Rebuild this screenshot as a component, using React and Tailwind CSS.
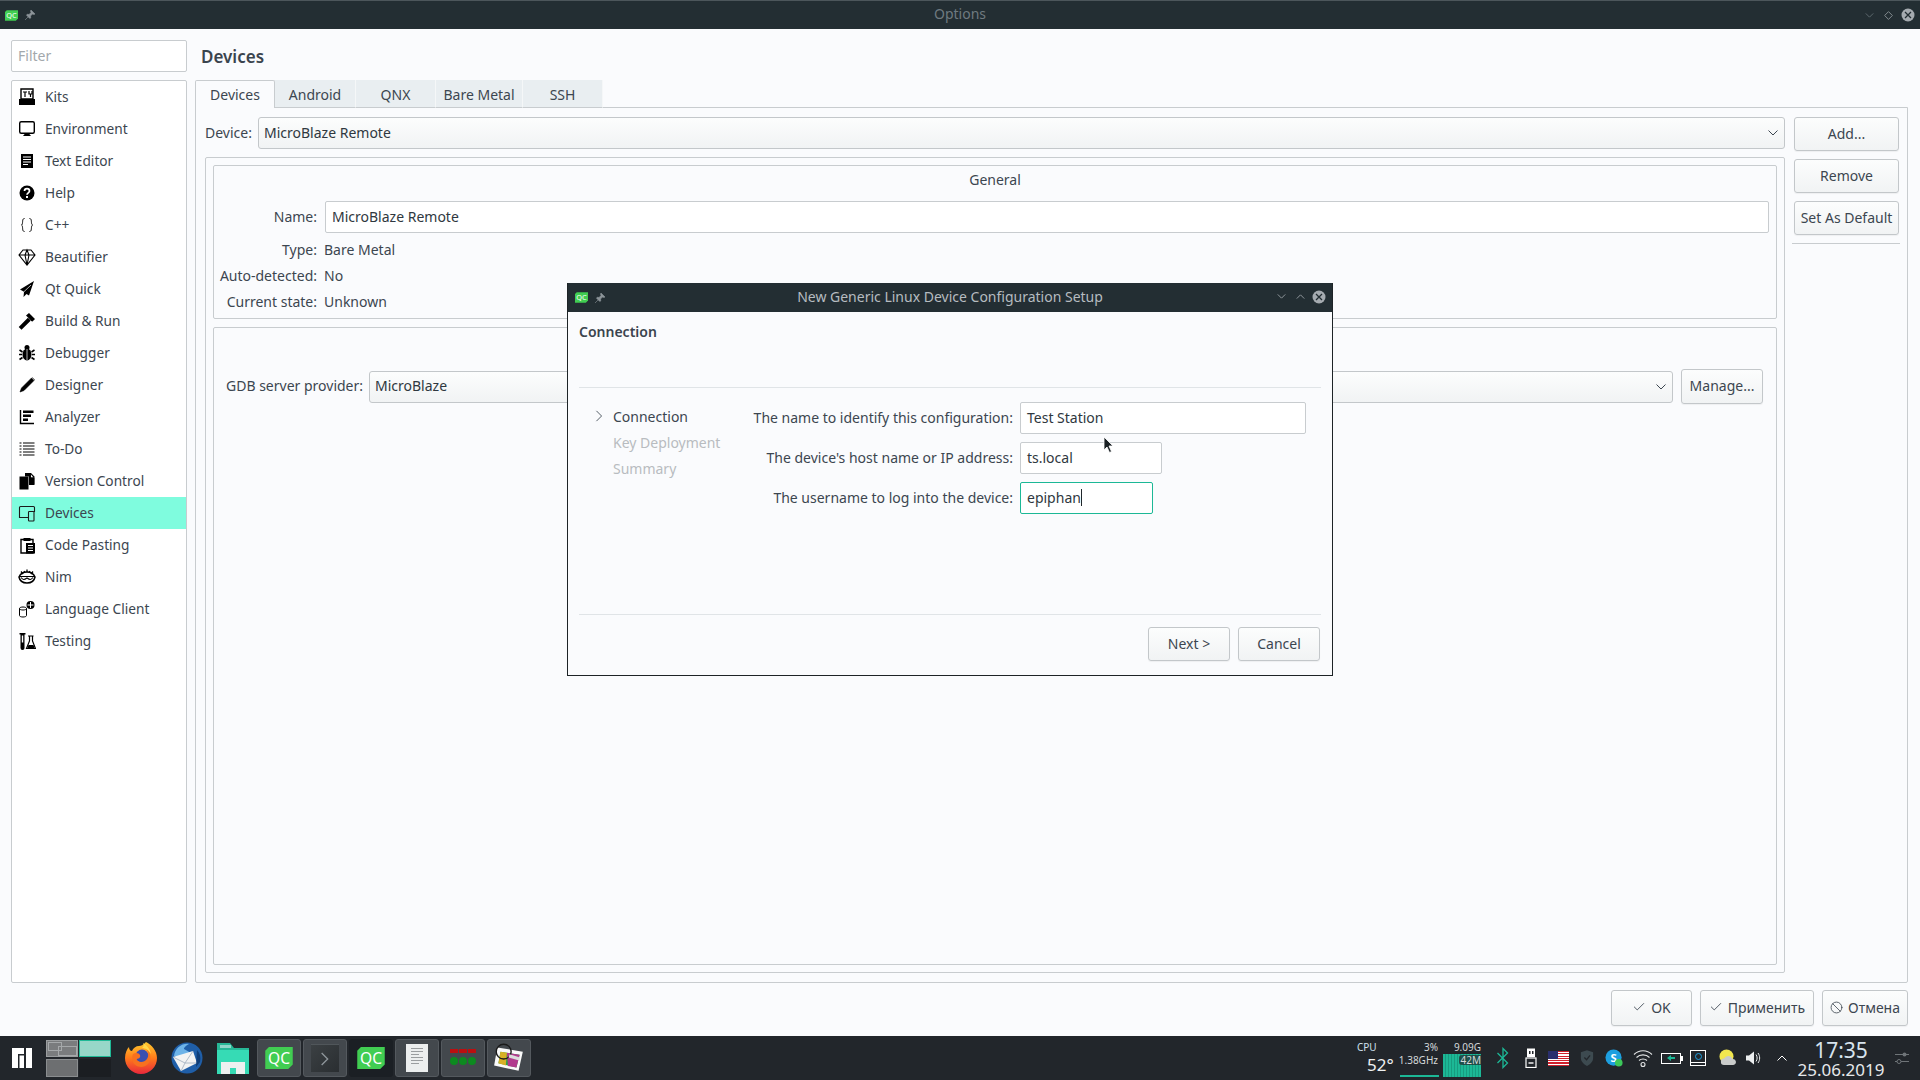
import { Check, Ban } from 'lucide-react'

const menuItems = ['Kits', 'Environment', 'Text Editor', 'Help', 'C++', 'Beautifier', 'Qt Quick', 'Build & Run', 'Debugger', 'Designer', 'Analyzer', 'To-Do', 'Version Control', 'Devices', 'Code Pasting', 'Nim', 'Language Client', 'Testing']

const icons = {
  Kits: <><path d="M3 1h12v10H3z" fill="none" stroke="#000" strokeWidth="1.4" /><path d="M1 11h16v6H1z" /><path d="M5 4h4M7 4v5M11 3v3h3V3M12.500 6v3" fill="none" stroke="#000" strokeWidth="1.2" /></>,
  Environment: <><rect x="1.700" y="1.700" width="14.600" height="11.600" rx="1.500" fill="none" stroke="#000" strokeWidth="1.400" /><path d="M5 16h8l-2-2.500H7z" /></>,
  'Text Editor': <><path d="M3 2h12v14H3z" /><path d="M5 5h8M5 7.500h8M5 10h8M5 12.500h5" stroke="#fff" strokeWidth="1" /></>,
  Help: <><circle cx="9" cy="9" r="7.500" /><path d="M6.500 7c0-3.200 5-3.200 5 0 0 2-2.500 1.800-2.500 3.800" fill="none" stroke="#fff" strokeWidth="1.700" /><path d="M8 12h2v2H8z" fill="#fff" /></>,
  'C++': <path d="M6.500 2.500c-3 0-1 5.500-3 6.500 2 1 0 6.500 3 6.500M11.500 2.500c3 0 1 5.500 3 6.500-2 1 0 6.500-3 6.500" fill="none" stroke="#000" strokeWidth="1" />,
  Beautifier: <path d="M5 2h8l4 5-8 10L1 7zM1 7h16M7 7l2-5 2 5M7 7l2 10 2-10" fill="none" stroke="#000" strokeWidth="1.100" />,
  'Qt Quick': <><path d="M16 1L2 9.500l4 2.200L5.500 17l3-3 2.500 1.500z" /><path d="M6 11.700L13 5" stroke="#fff" strokeWidth=".7" /></>,
  'Build & Run': <><path d="M8 3.500L11 1l6 6-2.500 2.500-1.500-.5-1-1.500z" /><path d="M10.500 6.500L2 15l1.500 1.500L12 8" stroke="#000" strokeWidth="1.800" /></>,
  Debugger: <><ellipse cx="9" cy="10.500" rx="4.500" ry="6" /><circle cx="9" cy="3.500" r="2.500" /><path d="M1.500 6l3 2M16.500 6l-3 2M1 10.500h3M17 10.500h-3M1.500 15.500l3-2M16.500 15.500l-3-2" stroke="#000" strokeWidth="1.600" /><path d="M9 5v11" stroke="#fff" strokeWidth=".7" /></>,
  Designer: <path d="M13.500 2l2.500 2.500L6 14.500 2 16l1.500-4zM14 1.200l2.800 2.800" fill="#000" stroke="#000" strokeWidth=".6" />,
  Analyzer: <><path d="M2.500 2v13.500H16" fill="none" stroke="#000" strokeWidth="1.400" /><path d="M5 2.500h10.500v2.500H5zM5 6.500h8v2.500H5zM5 10.500h5V13H5z" /></>,
  'To-Do': <path d="M1.500 3h2M5 3h11.500M1.500 6h2M5 6h11.500M1.500 9h2M5 9h11.500M1.500 12h2M5 12h11.500M1.500 15h2M5 15h11.500" stroke="#000" strokeWidth="1" />,
  'Version Control': <><path d="M1.500 4.500h9v13h-9z" /><path d="M7 1h6l3.500 3.500V13H11V4.500H7z" fill="#000" /><path d="M12.500 2v3.500h3" fill="#fff" /><path d="M8 1.700h4.500V6H15.800v6H11" fill="none" stroke="#000" strokeWidth=".9" /></>,
  Devices: <><path d="M11 13.500H1.500v-10a1 1 0 0 1 1-1h13a1 1 0 0 1 1 1V8" fill="none" stroke="#1a1a1a" strokeWidth="1.100" /><rect x="10.500" y="7.500" width="5.500" height="9.500" rx=".7" fill="none" stroke="#1a1a1a" strokeWidth="1.100" /></>,
  'Code Pasting': <><path d="M5.500 2h7v3h-7z" /><path d="M3 3.500h12V17H3z" fill="none" stroke="#000" strokeWidth="1.400" /><path d="M8 7h9v10.500H8z" /><path d="M10 9.500h5M10 12h5M10 14.500h5" stroke="#fff" strokeWidth="1" /></>,
  Nim: <><path d="M1 9c1.500-3.500 4-5 8-5s6.500 1.500 8 5c-.8 4-4 6-8 6s-7.200-2-8-6z" fill="none" stroke="#000" strokeWidth="1.500" /><path d="M3 3.500l2 2.500M9 1.500V4M15 3.500L13 6M6 3l1 1.500M12 3l-1 1.500" stroke="#000" strokeWidth="1.300" /><path d="M2 8.500h14M3 9.500c2 2.500 3 2.500 6 .5 3 2 4 2 6-.5" fill="none" stroke="#000" strokeWidth="1.100" /></>,
  'Language Client': <><path d="M1.500 8.500v7c0 2 7 2 7 0v-7M1.500 8.500c0-2 7-2 7 0s-7 2-7 0z" fill="none" stroke="#000" strokeWidth="1" /><circle cx="12.500" cy="5" r="4" /><path d="M12.500 2v6M9.500 5h6" stroke="#fff" strokeWidth="1" /></>,
  Testing: <><path d="M1.500 1h6v1.500h-1V16a2 2 0 0 1-4 0V2.500h-1z" /><path d="M3.800 3.500h1.400v7H3.800z" fill="#fff" /><path d="M10 4h5.500M11.500 4v5L8.500 16.500h9L14.500 9V4" fill="none" stroke="#000" strokeWidth="1.200" /><path d="M10.500 13h5l1.200 3.300H9.300z" /></>,
}

function MenuIcon({ name }) {
  return <svg viewBox="0 0 18 18" className="w-[18px] h-[18px] shrink-0">{icons[name]}</svg>
}

function QcIcon({ w, h, dark }) {
  return (
    <svg viewBox="0 0 30 24" width={w} height={h}>
      <path d="M4 0h26v19l-5 5H0V4z" fill={dark ? '#2fb65a' : '#41cd52'} />
      <text x="15" y="18" textAnchor="middle" fontSize="17" fontFamily="'Noto Sans',sans-serif" fill="#fff">QC</text>
    </svg>
  )
}

function PinIcon() {
  return (
    <svg viewBox="0 0 12 12" className="w-3 h-3 ml-[6px]">
      <path d="M7 1l4 4-1 .5L8.500 5 6.500 7l.3 1.800-1 .7-3.300-3.300.7-1L5 5.500l2-2L6.500 2zM4 8l-3 3" fill="#8c9499" stroke="#8c9499" strokeWidth=".6" />
    </svg>
  )
}

function CloseDot() {
  return (
    <svg viewBox="0 0 14 14" className="w-[14px] h-[14px]">
      <circle cx="7" cy="7" r="6.500" fill="#a5abb0" />
      <path d="M4 4l6 6M10 4l-6 6" stroke="#232e33" strokeWidth="1.300" />
    </svg>
  )
}

function Chevron({ up, cls }) {
  return (
    <svg viewBox="0 0 10 6" className={cls}>
      <path d={up ? 'M.5 5.500L5 1l4.500 4.500' : 'M.5.500L5 5 9.500.500'} fill="none" stroke="currentColor" strokeWidth="1" />
    </svg>
  )
}

function PushButton({ cls, children }) {
  return (
    <div className={`flex items-center justify-center shrink-0 pb-[2px] rounded-[3px] border border-[#c3c7ca] bg-gradient-to-b from-[#fcfdfd] to-[#f1f3f4] shadow-[0_1px_1px_rgba(0,0,0,0.05)] ${cls}`}>
      {children}
    </div>
  )
}

function Combo({ cls, text }) {
  return (
    <div className={`flex items-center h-[32px] pb-[2px] rounded-[3px] border border-[#c3c7ca] bg-gradient-to-b from-[#fcfdfd] to-[#f1f3f4] pl-[5px] pr-[6px] ${cls}`}>
      <span className="flex-1 text-[#2f3840]">{text}</span>
      <Chevron cls="w-[10px] h-[6px] mt-[2px] text-[#3c4650]" />
    </div>
  )
}

function Field({ cls, focused, children }) {
  return <div className={`flex items-center h-[32px] pb-[2px] shrink-0 rounded-[2px] border bg-white pl-[6px] text-[#2f3840] ${focused ? 'border-[#1cb896]' : 'border-[#c8cccf]'} ${cls}`}>{children}</div>
}

function TaskBox({ cls, children }) {
  return <div className={`w-[44px] h-[38px] flex items-center justify-center rounded-[3px] border ${cls || 'border-[#54595e] bg-[#43484d]'}`}>{children}</div>
}

function Manjaro() {
  return (
    <svg viewBox="0 0 20 20" className="w-5 h-5 ml-[12px]">
      <path d="M0 0h12v6H6v14H0zM7.500 7.500H12V20H7.500zM14 0h6v20h-6z" fill="#fff" />
    </svg>
  )
}

function Pager() {
  return (
    <div className="grid grid-cols-[32px_32px] grid-rows-[17px_18px] gap-x-[1px] gap-y-[2px] ml-[14px]">
      <div className="relative border border-[#9a9d9f] bg-[#7a7c7e]">
        <div className="absolute left-[1px] top-[1px] w-[14px] h-[9px] border border-[#a5a8aa]" />
        <div className="absolute left-[11px] top-[5px] w-[19px] h-[10px] border border-[#a5a8aa]" />
      </div>
      <div className="border border-[#1fb996] bg-[#97d7c8]" />
      <div className="border border-[#8a8d8f] bg-[#6d6f71]" />
      <div className="bg-[#1b1e22]" />
    </div>
  )
}

function Firefox() {
  return (
    <svg viewBox="0 0 32 32" className="w-[32px] h-[32px] ml-[14px]">
      <defs>
        <linearGradient id="ff" x1="0" y1="0" x2="0" y2="1">
          <stop offset="0" stopColor="#ffcb2e" />
          <stop offset=".5" stopColor="#ff7a1a" />
          <stop offset="1" stopColor="#e8273c" />
        </linearGradient>
      </defs>
      <path d="M21 0c6 3 11 9 11 16a16 16 0 0 1-32 0c0-5 2-9 4-11 0 2 1 4 3 4 1-3 4-5 7-5 2 0 4-1 7-4z" fill="url(#ff)" />
      <circle cx="17" cy="14" r="6.500" fill="#3a4fb0" />
      <path d="M8 12c3-2 6-1 7 1 1 3-2 4-4 4 2 4 8 4 11 0 2-3 2-7-1-10 5 3 6 10 2 15-5 5-13 3-15-2-1-3-1-6 0-8z" fill="#f7711f" />
      <path d="M18 1c3 2 7 5 8 11-2-4-6-6-9-6 2-1 2-3 1-5z" fill="#ffd84a" />
    </svg>
  )
}

function Thunderbird() {
  return (
    <svg viewBox="0 0 32 32" className="w-[32px] h-[32px] ml-[14px]">
      <circle cx="16" cy="16" r="15.500" fill="#1f5ea8" />
      <path d="M3 14C4 6 11 1 18 2c-4 2-5 4-5 5l7 4-10 4z" fill="#6db3e8" />
      <path d="M2 15l20-6 4 12-16 8z" fill="#f3f3f3" />
      <path d="M2 15l12 6 8-12M10 29l4-8 12 0" fill="none" stroke="#a9b6c4" strokeWidth=".9" />
      <path d="M26 8c3 3 4 7 3 12l-4 5z" fill="#0f3d78" />
    </svg>
  )
}

function FolderIcon() {
  return (
    <svg viewBox="0 0 32 32" className="w-[32px] h-[32px] ml-[14px]">
      <path d="M0 1h13l4 5h15v26H0z" fill="#27b797" />
      <path d="M0 8h32v24H0z" fill="#36dbb5" />
      <path d="M3 3h11v3H3z" fill="#8fd7ca" />
      <path d="M4 32V20h24v12H19v-6h-6v6z" fill="#eef0f0" />
    </svg>
  )
}

function Tray() {
  return (
    <div className="ml-auto flex items-center h-full text-[#d5d8da]">
      {/* cpu widget */}
      <div className="relative w-[126px] h-full mr-[15px] leading-none">
        <span className="absolute left-[2px] top-[6px] text-[10px] text-[#cfe0ee]">CPU</span>
        <span className="absolute left-[12px] top-[20px] text-[17px] text-[#eef0f1]">52°</span>
        <span className="absolute right-[43px] top-[6px] text-[10px]">3%</span>
        <span className="absolute right-[43px] top-[19px] text-[10px]">1.38GHz</span>
        <div className="absolute left-[45px] top-[39px] w-[39px] h-[2px] bg-[#1cb896]" />
        <div className="absolute left-[88px] top-[18px] w-[38px] h-[23px] bg-[repeating-linear-gradient(90deg,#1cb896_0,#1cb896_2px,#179c80_2px,#179c80_3px)]" />
        <span className="absolute right-0 top-[6px] text-[10px]">9.09G</span>
        <span className="absolute right-0 top-[19px] text-[10px] bg-[#22262b]/70 rounded-l-[3px] pl-[1px]">42M</span>
      </div>
      <svg viewBox="0 0 14 22" className="w-[14px] h-[22px]"><path d="M1.500 6l10 10L7 20.500V1.500L11.500 6l-10 10" fill="none" stroke="#1cb896" strokeWidth="1.300" /></svg>
      <svg viewBox="0 0 12 20" className="w-[12px] h-[20px] ml-[15px]"><path d="M2 .500h8V9H2z" fill="#fff" /><path d="M4 3h1.500v3H4zM7 3h1.500v3H7z" fill="#22262b" /><rect x="1" y="10" width="10" height="9.500" fill="none" stroke="#fff" strokeWidth="1.200" /><path d="M3.500 15h5" stroke="#fff" strokeWidth="1.400" /></svg>
      {/* flag */}
      <div className="relative ml-[11px] w-[21px] h-[15px] bg-[repeating-linear-gradient(180deg,#d0202c_0,#d0202c_1.150px,#fff_1.150px,#fff_2.300px)]">
        <div className="absolute left-0 top-0 w-[10px] h-[8px] bg-[#2a2f6e]" />
      </div>
      <svg viewBox="0 0 16 18" className="w-[14px] h-[16px] ml-[11px]"><path d="M8 0l7 2.500V9c0 4-3 7-7 9-4-2-7-5-7-9V2.500z" fill="#3d4a50" /><path d="M5 8.500l2.500 2.500L11.500 6" fill="none" stroke="#22262b" strokeWidth="1.500" /></svg>
      <svg viewBox="0 0 20 20" className="w-[19px] h-[19px] ml-[11px]">
        <circle cx="9" cy="9" r="8.500" fill="#1d9fe0" />
        <text x="9" y="13.500" textAnchor="middle" fontSize="12" fontWeight="700" fontFamily="'Noto Sans',sans-serif" fill="#fff">S</text>
        <circle cx="14.500" cy="14.500" r="4" fill="#3cc85a" />
      </svg>
      <svg viewBox="0 0 20 20" className="w-[20px] h-[20px] ml-[9px]"><path d="M1 6.500c5-5 13-5 18 0M3.500 9.500c3.500-3.500 9.500-3.500 13 0M6 12.500c2.200-2 5.800-2 8 0" fill="none" stroke="#e2e4e5" strokeWidth="1.100" /><circle cx="10" cy="16.500" r="2" fill="none" stroke="#e2e4e5" strokeWidth="1.100" /></svg>
      <div className="relative ml-[8px] w-[20px] h-[11px] border border-white flex items-center justify-center">
        <div className="absolute -right-[3px] top-[2px] w-[2px] h-[5px] bg-white" />
        <svg viewBox="0 0 8 8" className="w-[8px] h-[8px]"><path d="M0 4l4-3v2h4v2H4v2z" fill="#1cb896" /></svg>
      </div>
      <div className="ml-[9px] w-[16px] h-[16px] border border-white flex flex-col items-center justify-between">
        <div className="mt-[2px] w-[7px] h-[7px] rounded-full border border-[#1d9fe0]" />
        <div className="w-full h-[3px] border-t border-white" />
      </div>
      <svg viewBox="0 0 18 18" className="w-[18px] h-[18px] ml-[13px]"><circle cx="7.500" cy="7.500" r="7" fill="#f2e74e" /><path d="M5 16a3.200 3.200 0 0 1 .2-6.400A4.500 4.500 0 0 1 13.500 10a3 3 0 0 1 .8 6z" fill="#c9cbca" /></svg>
      <svg viewBox="0 0 15 14" className="w-[15px] h-[14px] ml-[9px]"><path d="M0 4.500h3L8 .500v13l-5-4H0z" fill="#eceeef" /><path d="M10 3.500c1.500 2 1.500 5 0 7M12 2c2.200 3 2.200 7 0 10" fill="none" stroke="#eceeef" strokeWidth="1" /></svg>
      <Chevron up cls="w-[10px] h-[6px] ml-[16px] text-white" />
      <div className="w-[96px] ml-[6px] flex flex-col items-center leading-none">
        <span className="text-[21px] text-[#d8e4ee] mt-[1px]">17:35</span>
        <span className="text-[17px] text-[#e6e8ea]">25.06.2019</span>
      </div>
      <svg viewBox="0 0 14 14" className="w-[14px] h-[14px] ml-[6px] mr-[11px]"><path d="M0 3.500h14M0 10.500h14" stroke="#6f7478" strokeWidth="1" /><circle cx="9.500" cy="3.500" r="2" fill="#6f7478" /><circle cx="4" cy="10.500" r="2" fill="#22262b" stroke="#6f7478" /></svg>
    </div>
  )
}

export default function App() {
  return (
    <div className="relative w-[1920px] h-[1080px] overflow-hidden flex flex-col bg-[#fafbfd] font-['Noto_Sans',sans-serif] text-[14px] text-[#3c4650]">
      {/* Title bar */}
      <header className="relative h-[29px] shrink-0 flex items-center bg-[#232e33] border-t border-[#4c565b] pl-[5px] pr-[5px]">
        <QcIcon w={13} h={11} />
        <PinIcon />
        <span className="absolute inset-x-0 -mt-[4px] text-center text-[#6f7a80]">Options</span>
        <div className="ml-auto flex items-center text-[#69747a]">
          <Chevron cls="w-[9px] h-[5px]" />
          <svg viewBox="0 0 10 10" className="w-[9px] h-[9px] ml-[10px]"><path d="M5 .700L9.300 5 5 9.300.700 5z" fill="none" stroke="#8c9499" /></svg>
          <span className="ml-[8px]"><CloseDot /></span>
        </div>
      </header>

      <div className="flex-1 min-h-0 flex flex-col">
        <div className="flex-1 min-h-0 flex pl-[11px] pr-[12px] pt-[11px]">
          {/* Left column */}
          <aside className="w-[176px] shrink-0 flex flex-col gap-[8px]">
            <div className="h-[32px] flex items-center pb-[2px] border border-[#c8cccf] rounded-[2px] bg-white pl-[6px] text-[#a3a8ac]">Filter</div>
            <nav className="flex-1 border border-[#c8cccf] rounded-[2px] bg-white text-[13.700px]">
              {menuItems.map(item => (
                <div key={item} className={`h-[32px] flex items-center gap-[9px] pl-[6px] ${item === 'Devices' ? 'bg-[#7ffcde]' : ''}`}>
                  <MenuIcon name={item} />
                  <span>{item}</span>
                </div>
              ))}
            </nav>
          </aside>

          {/* Page */}
          <main className="flex-1 min-w-0 flex flex-col ml-[8px]">
            <h1 className="h-[40px] shrink-0 pl-[6px] pt-[6px] text-[17px] leading-[22px] font-semibold text-[#3a444e]">Devices</h1>
            <div className="flex h-[28px] shrink-0 relative z-10">
              <div className="w-[80px] flex items-center justify-center pb-px bg-[#fafbfd] border border-b-0 border-[#c8cccf] rounded-t-[2px]">Devices</div>
              {[['Android', 'w-[81px]'], ['QNX', 'w-[80px]'], ['Bare Metal', 'w-[87px]'], ['SSH', 'w-[80px]']].map(([t, w]) => (
                <div key={t} className={`${w} flex items-center justify-center pt-px bg-[#e9eef1] border-r border-[#f5f7f8] border-b border-b-[#c8cccf]`}>{t}</div>
              ))}
            </div>
            <section className="flex-1 min-h-0 -mt-px flex gap-[9px] border border-[#c8cccf] rounded-b-[2px] pl-[9px] pr-[9px] pt-[9px] pb-[9px]">
              <div className="w-[1580px] shrink-0 flex flex-col">
                <div className="flex items-center h-[32px] shrink-0">
                  <span className="w-[53px] shrink-0 pb-[2px]">Device:</span>
                  <Combo cls="flex-1 text-[#2f3840]" text="MicroBlaze Remote" />
                </div>
                <div className="flex-1 min-h-0 mt-[8px] border border-[#c8cccf] rounded-[2px] p-[7px] flex flex-col gap-[8px]">
                  {/* General */}
                  <div className="h-[154px] shrink-0 border border-[#c8cccf] rounded-[2px] flex flex-col pr-[7px]">
                    <div className="h-[28px] shrink-0 flex items-center justify-center pb-[2px] pl-[7px]">General</div>
                    <div className="mt-[7px] grid grid-cols-[103px_1fr] gap-x-[8px]">
                      <span className="self-center text-right pb-[2px]">Name:</span>
                      <Field>MicroBlaze Remote</Field>
                    </div>
                    <div className="mt-[3px] grid grid-cols-[103px_1fr] gap-x-[7px] auto-rows-[26px] items-center">
                      <span className="text-right">Type:</span>
                      <span>Bare Metal</span>
                      <span className="text-right">Auto-detected:</span>
                      <span>No</span>
                      <span className="text-right">Current state:</span>
                      <span>Unknown</span>
                    </div>
                  </div>
                  {/* Device specific */}
                  <div className="flex-1 min-h-0 border border-[#c8cccf] rounded-[2px] pl-[12px] pr-[13px] pt-[41px]">
                    <div className="flex items-center h-[35px] gap-[7px]">
                      <span className="w-[136px] shrink-0 pb-[2px] whitespace-nowrap">GDB server provider:</span>
                      <Combo cls="flex-1" text="MicroBlaze" />
                      <PushButton cls="w-[82px] h-[35px] ml-[1px]">Manage...</PushButton>
                    </div>
                  </div>
                </div>
              </div>
              <div className="flex-1 flex flex-col gap-[8px]">
                <PushButton cls="h-[34px] -mr-px">Add...</PushButton>
                <PushButton cls="h-[34px] -mr-px">Remove</PushButton>
                <PushButton cls="h-[34px] -mr-px">Set As Default</PushButton>
                <div className="-mx-[2px] border-t border-[#c8cccf]" />
              </div>
            </section>
          </main>
        </div>

        {/* Footer buttons */}
        <footer className="h-[53px] shrink-0 flex justify-end gap-[8px] pt-[7px] pr-[12px]">
          <PushButton cls="w-[81px] h-[36px] gap-[5px]"><Check size={14} strokeWidth={1.5} />OK</PushButton>
          <PushButton cls="w-[114px] h-[36px] gap-[5px]"><Check size={14} strokeWidth={1.5} />Применить</PushButton>
          <PushButton cls="w-[86px] h-[36px] gap-[5px]"><Ban size={13} strokeWidth={1.5} />Отмена</PushButton>
        </footer>
      </div>

      {/* Taskbar */}
      <div className="h-[44px] shrink-0 flex items-center bg-[#22262b]">
        <Manjaro />
        <Pager />
        <Firefox />
        <Thunderbird />
        <FolderIcon />
        <div className="flex gap-[2px] ml-[8px]">
          <TaskBox><QcIcon w={28} h={22} /></TaskBox>
          <TaskBox>
            <div className="w-[28px] h-[28px] flex items-center justify-center bg-gradient-to-br from-[#3b4043] to-[#2a2e31] border-t border-[#50565a]">
              <Chevron cls="w-[14px] h-[8px] rotate-[-90deg] text-[#8f969b]" />
            </div>
          </TaskBox>
          <TaskBox cls="bg-[#1b1f24] border-[#1b1f24]"><QcIcon w={28} h={22} /></TaskBox>
          <TaskBox>
            <div className="w-[22px] h-[28px] bg-[#eceeee] flex flex-col gap-[2px] px-[5px] pt-[4px]">
              <div className="h-px bg-[#9a9d9f]" /><div className="h-px bg-[#9a9d9f]" /><div className="h-px bg-[#9a9d9f] w-2/3" /><div className="h-px bg-[#9a9d9f]" /><div className="h-px bg-[#9a9d9f]" /><div className="h-px bg-[#9a9d9f] w-2/3" />
            </div>
          </TaskBox>
          <TaskBox>
            <svg viewBox="0 0 30 20" className="w-[30px] h-[20px]">
              <path d="M2 1h8v4H2zM11 1h8v4h-8zM20 1h8v4h-8z" fill="#bb0f10" />
              <circle cx="6" cy="13" r="4" fill="#0c8a1f" /><circle cx="15" cy="13" r="4" fill="#0c8a1f" /><circle cx="24" cy="13" r="4" fill="#0c8a1f" />
            </svg>
          </TaskBox>
          <TaskBox>
            <svg viewBox="0 0 32 30" className="w-[34px] h-[32px]">
              <path d="M5 5l24 4-4 18L2 22z" fill="#fafafa" />
              <path d="M8 9l18 3-3 12L6 20z" fill="#2da14a" />
              <path d="M14 10l12 2-3 12-8-1.500z" fill="#b23a8e" />
              <path d="M8 9l6 1-1 12-7-2z" fill="#d8b026" />
              <circle cx="11" cy="9" r="7" fill="none" stroke="#1a1a1a" strokeWidth="1.300" />
              <path d="M16 13l10 3" stroke="#dcdcdc" strokeWidth="3" />
            </svg>
          </TaskBox>
        </div>
        <Tray />
      </div>

      {/* Setup dialog */}
      <div className="absolute left-[567px] top-[283px] w-[766px] h-[393px] flex flex-col bg-[#fafbfd] border border-[#1d2326] border-t-0">
        <div className="relative h-[29px] shrink-0 flex items-center bg-[#232e33] pl-[7px] pr-[6px]">
          <QcIcon w={13} h={11} />
          <PinIcon />
          <span className="absolute inset-x-0 -mt-[2px] text-center text-[#b6bcc0]">New Generic Linux Device Configuration Setup</span>
          <div className="ml-auto mb-[2px] flex items-center text-[#a5abb0]">
            <Chevron cls="w-[9px] h-[5px]" />
            <Chevron up cls="w-[9px] h-[5px] ml-[10px]" />
            <span className="ml-[7px]"><CloseDot /></span>
          </div>
        </div>
        <div className="flex-1 flex flex-col px-[11px]">
          <div className="h-[76px] shrink-0 border-b border-[#e0e4e7] pt-[10px] font-semibold leading-[20px] text-[#3a444e]">Connection</div>
          <div className="h-[227px] shrink-0 border-b border-[#e0e4e7] flex">
            <div className="w-[167px] shrink-0 pt-[15px] pl-[34px]">
              <div className="relative h-[26px] flex items-center">
                <svg viewBox="0 0 8 14" className="absolute -left-[18px] w-[8px] h-[12px]"><path d="M1 1l6 6-6 6" fill="none" stroke="#3c4650" strokeWidth="1" /></svg>
                Connection
              </div>
              <div className="h-[26px] flex items-center text-[#b8bcc0] whitespace-nowrap">Key Deployment</div>
              <div className="h-[26px] flex items-center text-[#b8bcc0]">Summary</div>
            </div>
            <div className="flex-1 pt-[14px] flex flex-col gap-[8px]">
              <div className="flex items-center gap-[7px]">
                <span className="w-[267px] pb-[2px] text-right whitespace-nowrap">The name to identify this configuration:</span>
                <Field cls="w-[286px]">Test Station</Field>
              </div>
              <div className="flex items-center gap-[7px]">
                <span className="w-[267px] pb-[2px] text-right whitespace-nowrap">The device's host name or IP address:</span>
                <Field cls="w-[142px]">ts.local</Field>
              </div>
              <div className="flex items-center gap-[7px]">
                <span className="w-[267px] pb-[2px] text-right whitespace-nowrap">The username to log into the device:</span>
                <Field cls="w-[133px]" focused>epiphan<span className="inline-block w-px h-[17px] bg-[#20272c]" /></Field>
              </div>
            </div>
          </div>
          <div className="flex justify-end gap-[8px] pt-[12px] pr-[1px]">
            <PushButton cls="w-[82px] h-[34px]">Next &gt;</PushButton>
            <PushButton cls="w-[82px] h-[34px]">Cancel</PushButton>
          </div>
        </div>
      </div>

      {/* Mouse pointer */}
      <svg viewBox="0 0 12 18" className="absolute left-[1103px] top-[436px] w-[12px] h-[18px]">
        <path d="M1 1v13l3-3 2.500 5.500 2-1L6 10h4z" fill="#1a2024" stroke="#fff" strokeWidth=".8" />
      </svg>
    </div>
  )
}
